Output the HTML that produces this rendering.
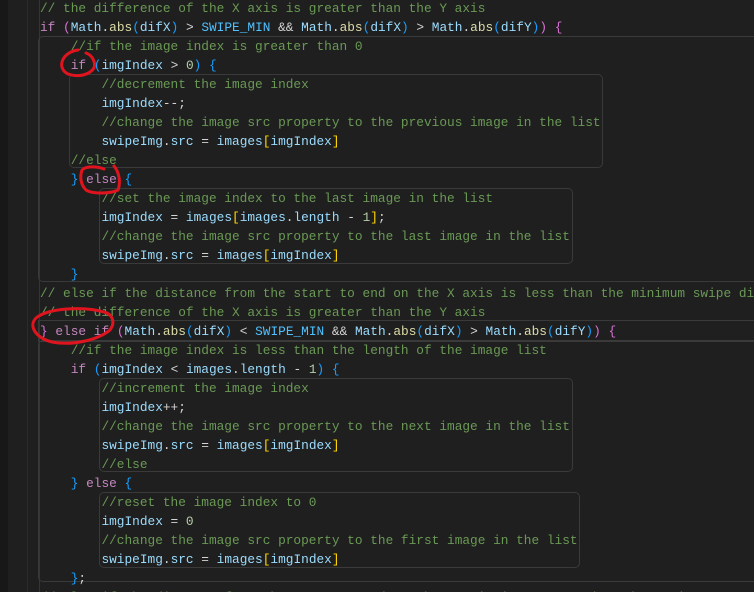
<!DOCTYPE html>
<html><head><style>
html,body{margin:0;padding:0;width:754px;height:592px;overflow:hidden;background:#1f1f1f;}
#w{position:absolute;left:0;top:0;width:754px;height:592px;overflow:hidden;}
#t{position:absolute;left:0;top:2px;width:754px;height:600px;}
.g{position:absolute;left:0;top:0;width:8px;height:592px;background:#181818;}
.g2{position:absolute;left:27px;top:0;width:1px;height:592px;background:#2b2b2b;}
.l{position:absolute;left:40px;white-space:pre;font-family:"Liberation Mono",monospace;font-size:12.8px;line-height:19px;height:19px;color:#d4d4d4;}
.c{color:#6a9955}.k{color:#c586c0}.v{color:#9cdcfe}.n{color:#4fc1ff}.f{color:#dcdcaa}.p{color:#da70d6}.b{color:#179fff}.y{color:#ffd700}.num{color:#b5cea8}
.box{position:absolute;border:1px solid #3a3a3a;border-radius:5px;}
.ig{position:absolute;width:1px;background:#353535;}
</style></head><body><div id="w">
<div class="g"></div><div class="g2"></div>
<div class="ig" style="left:39px;top:0;height:592px"></div>
<div class="box" style="left:38px;top:36px;width:760px;height:244px;border-radius:5px 0 0 5px"></div>
<div class="box" style="left:69px;top:74px;width:532px;height:92px"></div>
<div class="box" style="left:99px;top:188px;width:472px;height:74px"></div>
<div class="box" style="left:38px;top:320px;width:760px;height:20px;border-radius:0"></div>
<div class="box" style="left:38px;top:340px;width:760px;height:240px;border-radius:5px 0 0 5px"></div>
<div class="box" style="left:99px;top:378px;width:472px;height:92px"></div>
<div class="box" style="left:99px;top:492px;width:479px;height:74px"></div>
<div id="t">
<div class="l" style="top:-3px"><span class="c">// the difference of the X axis is greater than the Y axis</span></div>
<div class="l" style="top:16px"><span class="k">if</span> <span class="p">(</span><span class="v">Math</span>.<span class="f">abs</span><span class="b">(</span><span class="v">difX</span><span class="b">)</span> &gt; <span class="n">SWIPE_MIN</span> &amp;&amp; <span class="v">Math</span>.<span class="f">abs</span><span class="b">(</span><span class="v">difX</span><span class="b">)</span> &gt; <span class="v">Math</span>.<span class="f">abs</span><span class="b">(</span><span class="v">difY</span><span class="b">)</span><span class="p">)</span> <span class="p">{</span></div>
<div class="l" style="top:35px">    <span class="c">//if the image index is greater than 0</span></div>
<div class="l" style="top:54px">    <span class="k">if</span> <span class="b">(</span><span class="v">imgIndex</span> &gt; <span class="num">0</span><span class="b">)</span> <span class="b">{</span></div>
<div class="l" style="top:73px">        <span class="c">//decrement the image index</span></div>
<div class="l" style="top:92px">        <span class="v">imgIndex</span>--;</div>
<div class="l" style="top:111px">        <span class="c">//change the image src property to the previous image in the list</span></div>
<div class="l" style="top:130px">        <span class="v">swipeImg</span>.<span class="v">src</span> = <span class="v">images</span><span class="y">[</span><span class="v">imgIndex</span><span class="y">]</span></div>
<div class="l" style="top:149px">    <span class="c">//else</span></div>
<div class="l" style="top:168px">    <span class="b">}</span> <span class="k">else</span> <span class="b">{</span></div>
<div class="l" style="top:187px">        <span class="c">//set the image index to the last image in the list</span></div>
<div class="l" style="top:206px">        <span class="v">imgIndex</span> = <span class="v">images</span><span class="y">[</span><span class="v">images</span>.<span class="v">length</span> - <span class="num">1</span><span class="y">]</span>;</div>
<div class="l" style="top:225px">        <span class="c">//change the image src property to the last image in the list</span></div>
<div class="l" style="top:244px">        <span class="v">swipeImg</span>.<span class="v">src</span> = <span class="v">images</span><span class="y">[</span><span class="v">imgIndex</span><span class="y">]</span></div>
<div class="l" style="top:263px">    <span class="b">}</span></div>
<div class="l" style="top:282px"><span class="c">// else if the distance from the start to end on the X axis is less than the minimum swipe di</span></div>
<div class="l" style="top:301px"><span class="c">// the difference of the X axis is greater than the Y axis</span></div>
<div class="l" style="top:320px"><span class="p">}</span> <span class="k">else if</span> <span class="p">(</span><span class="v">Math</span>.<span class="f">abs</span><span class="b">(</span><span class="v">difX</span><span class="b">)</span> &lt; <span class="n">SWIPE_MIN</span> &amp;&amp; <span class="v">Math</span>.<span class="f">abs</span><span class="b">(</span><span class="v">difX</span><span class="b">)</span> &gt; <span class="v">Math</span>.<span class="f">abs</span><span class="b">(</span><span class="v">difY</span><span class="b">)</span><span class="p">)</span> <span class="p">{</span></div>
<div class="l" style="top:339px">    <span class="c">//if the image index is less than the length of the image list</span></div>
<div class="l" style="top:358px">    <span class="k">if</span> <span class="b">(</span><span class="v">imgIndex</span> &lt; <span class="v">images</span>.<span class="v">length</span> - <span class="num">1</span><span class="b">)</span> <span class="b">{</span></div>
<div class="l" style="top:377px">        <span class="c">//increment the image index</span></div>
<div class="l" style="top:396px">        <span class="v">imgIndex</span>++;</div>
<div class="l" style="top:415px">        <span class="c">//change the image src property to the next image in the list</span></div>
<div class="l" style="top:434px">        <span class="v">swipeImg</span>.<span class="v">src</span> = <span class="v">images</span><span class="y">[</span><span class="v">imgIndex</span><span class="y">]</span></div>
<div class="l" style="top:453px">        <span class="c">//else</span></div>
<div class="l" style="top:472px">    <span class="b">}</span> <span class="k">else</span> <span class="b">{</span></div>
<div class="l" style="top:491px">        <span class="c">//reset the image index to 0</span></div>
<div class="l" style="top:510px">        <span class="v">imgIndex</span> = <span class="num">0</span></div>
<div class="l" style="top:529px">        <span class="c">//change the image src property to the first image in the list</span></div>
<div class="l" style="top:548px">        <span class="v">swipeImg</span>.<span class="v">src</span> = <span class="v">images</span><span class="y">[</span><span class="v">imgIndex</span><span class="y">]</span></div>
<div class="l" style="top:567px">    <span class="b">}</span>;</div>
<div class="l" style="top:586px"><span class="c">// else if the distance from the start to end on the X axis is greater than the maximum</span></div>
</div>
<svg width="754" height="592" style="position:absolute;left:0;top:0" fill="none" stroke="#e0141e" stroke-width="3" stroke-linecap="round">
<path d="M78 50 C62 52 56 68 68 74 C80 78 90 74 94 68 C96 62 92 55 86 53"/>
<path d="M114 166 C119 172 121 182 118 190 C110 194 92 194 86 190 C80 184 80 176 82 170 C86 166 96 166 104 169"/>
<path d="M104 312 C84 306 48 308 36 318 C28 326 36 338 52 342 C72 346 98 340 110 330 C116 322 112 314 104 312"/>
</svg>
</div></body></html>
